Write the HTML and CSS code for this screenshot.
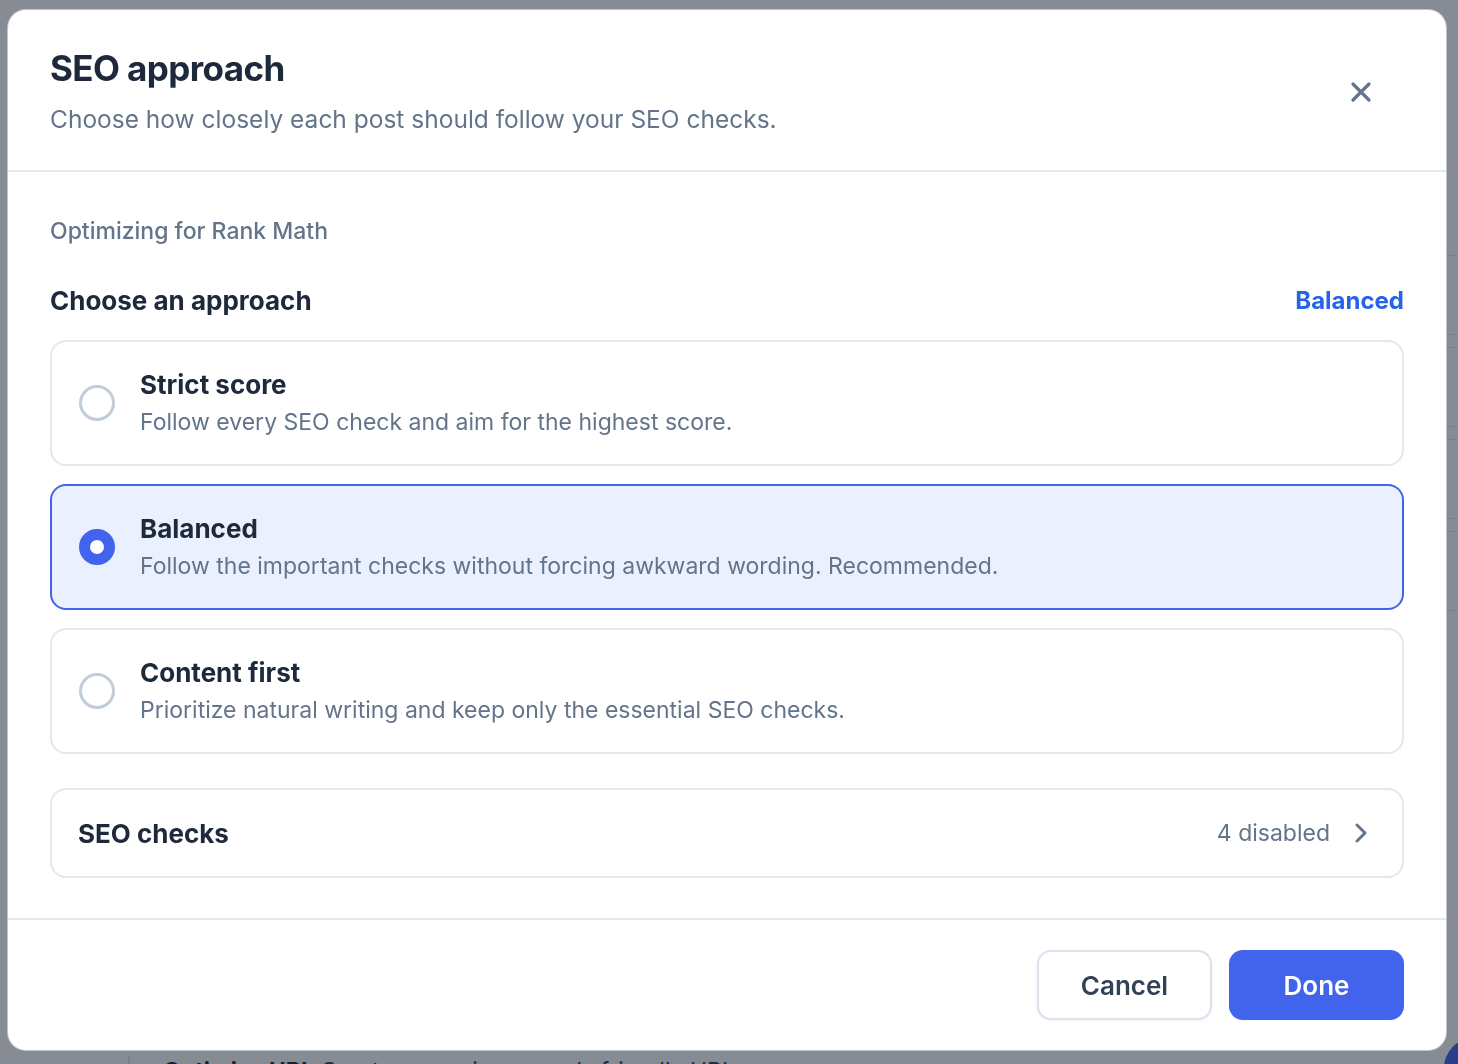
FILE: index.html
```html
<!DOCTYPE html>
<html lang="en">
<head>
    <meta charset="UTF-8">
    <meta name="viewport" content="width=device-width, initial-scale=1.0">
    <title>SEO approach</title>
    <link rel="stylesheet" href="styles.css">
</head>
<body>

    <div class="page">
        <main class="content">
            <div class="row"></div>
            <div class="row"></div>
            <div class="row"></div>
            <div class="row"></div>
            <div class="task"><b>Optimize URL</b> Create a concise, search-friendly URL</div>
        </main>
        <div class="fab"></div>
    </div>

    <div class="overlay">
        <div class="modal">
            <div class="modal-header">
                <div>
                    <h2>SEO approach</h2>
                    <p class="subtitle">Choose how closely each post should follow your SEO checks.</p>
                </div>
                <button class="close" aria-label="Close">
                    <svg width="22" height="22" viewBox="0 0 22 22"><path d="M3 3L19 19M19 3L3 19" stroke="#64748b" stroke-width="3.2" stroke-linecap="round"/></svg>
                </button>
            </div>

            <div class="modal-body">
                <div class="target">Optimizing for Rank Math</div>

                <div class="section-head">
                    <span class="section-title">Choose an approach</span>
                    <span class="section-value">Balanced</span>
                </div>

                <div class="options">
                    <div class="option">
                        <span class="radio"></span>
                        <div class="option-text">
                            <div class="option-title">Strict score</div>
                            <div class="option-desc">Follow every SEO check and aim for the highest score.</div>
                        </div>
                    </div>
                    <div class="option selected">
                        <span class="radio"></span>
                        <div class="option-text">
                            <div class="option-title">Balanced</div>
                            <div class="option-desc">Follow the important checks without forcing awkward wording. Recommended.</div>
                        </div>
                    </div>
                    <div class="option">
                        <span class="radio"></span>
                        <div class="option-text">
                            <div class="option-title">Content first</div>
                            <div class="option-desc">Prioritize natural writing and keep only the essential SEO checks.</div>
                        </div>
                    </div>
                </div>

                <div class="checks">
                    <span class="checks-title">SEO checks</span>
                    <span class="checks-meta">
                        4 disabled
                        <svg width="14" height="22" viewBox="0 0 14 22"><path d="M3 3L11 11L3 19" fill="none" stroke="#64748b" stroke-width="3" stroke-linecap="round" stroke-linejoin="round"/></svg>
                    </span>
                </div>
            </div>

            <div class="modal-footer">
                <button class="btn btn-cancel">Cancel</button>
                <button class="btn btn-done">Done</button>
            </div>
        </div>
    </div>

</body>
</html>
```

FILE: styles.css
```css
* {
    box-sizing: border-box;
}
body {
    margin: 0;
    font-family: Inter, "Noto Sans", Arial, sans-serif;
    background: #fff;
    color: #1e293b;
    overflow: hidden;
}

/* page behind the dialog */
.page {
    height: 1064px;
    position: relative;
}
.content {
    padding: 255px 0 0 128px;
}
.row {
    height: 80px;
    margin-bottom: 12px;
    border-top: 1px solid #e2e8f0;
    border-bottom: 1px solid #e2e8f0;
}
.task {
    margin-top: 445px;
    padding: 0 0 20px 33px;
    border-left: 2px solid #e2e8f0;
    font-size: 23px;
    line-height: 30px;
    color: #334155;
}
.task b {
    color: #1e293b;
}
.fab {
    position: absolute;
    left: 1444px;
    top: 1038px;
    width: 60px;
    height: 60px;
    border-radius: 50%;
    background: #4263eb;
}

/* dialog */
.overlay {
    position: fixed;
    inset: 0;
    background: rgba(15, 23, 42, 0.5);
    padding: 10px 0 0 8px;
}
.modal {
    width: 1438px;
    height: 1040px;
    background: #fff;
    border-radius: 18px;
    display: flex;
    flex-direction: column;
    box-shadow: 0 0 0 1px rgba(226, 232, 240, 0.6);
}
.modal-header {
    display: flex;
    align-items: center;
    justify-content: space-between;
    padding: 38px 42px 35px 42px;
    border-bottom: 2px solid #e2e8f0;
}
.modal-header h2 {
    margin: 0;
    font-size: 35px;
    line-height: 40px;
    font-weight: 700;
    letter-spacing: -0.6px;
    color: #1e293b;
}
.subtitle {
    margin: 15px 0 0;
    font-size: 24.5px;
    line-height: 32px;
    color: #64748b;
}
.close {
    width: 40px;
    height: 40px;
    margin-right: 23px;
    border: none;
    background: none;
    padding: 0;
    display: flex;
    align-items: center;
    justify-content: center;
    cursor: pointer;
}

.modal-body {
    flex: 1;
    padding: 44px 42px 0 42px;
}
.target {
    font-size: 23px;
    line-height: 30px;
    font-weight: 500;
    color: #64748b;
}
.section-head {
    display: flex;
    justify-content: space-between;
    align-items: center;
    margin-top: 38px;
    height: 32px;
}
.section-title {
    font-size: 26px;
    font-weight: 700;
}
.section-value {
    font-size: 24px;
    font-weight: 700;
    color: #2563eb;
}
.options {
    display: flex;
    flex-direction: column;
    gap: 18px;
    margin-top: 24px;
}
.option {
    flex-shrink: 0;
    height: 126px;
    display: flex;
    align-items: center;
    gap: 25px;
    padding-left: 27px;
    border: 2px solid #e2e8f0;
    border-radius: 16px;
    background: #fff;
}
.option.selected {
    border-color: #4263eb;
    background: #eaf0fd;
}
.radio {
    width: 36px;
    height: 36px;
    border-radius: 50%;
    border: 3px solid #c3ccd9;
    flex-shrink: 0;
}
.option.selected .radio {
    border: 11px solid #4263eb;
    background: #fff;
}
.option-title {
    font-size: 26px;
    line-height: 32px;
    font-weight: 700;
    color: #1e293b;
}
.option-desc {
    margin-top: 6px;
    font-size: 23px;
    line-height: 30px;
    color: #64748b;
}
.checks {
    margin-top: 34px;
    height: 90px;
    display: flex;
    align-items: center;
    justify-content: space-between;
    padding: 0 34px 0 26px;
    border: 2px solid #e2e8f0;
    border-radius: 16px;
}
.checks-title {
    font-size: 26px;
    font-weight: 700;
}
.checks-meta {
    display: flex;
    align-items: center;
    gap: 24px;
    font-size: 23px;
    color: #64748b;
}

.modal-footer {
    display: flex;
    justify-content: flex-end;
    gap: 17px;
    padding: 30px 42px 30px;
    border-top: 2px solid #e2e8f0;
}
.btn {
    width: 175px;
    height: 70px;
    border-radius: 14px;
    font-family: inherit;
    font-size: 26px;
    font-weight: 600;
    cursor: pointer;
}
.btn-cancel {
    background: #fff;
    color: #334155;
    border: 2px solid #dbe3ef;
    box-shadow: 0 1px 3px rgba(15, 23, 42, 0.06);
}
.btn-done {
    background: #4263eb;
    color: #fff;
    border: none;
}
```
